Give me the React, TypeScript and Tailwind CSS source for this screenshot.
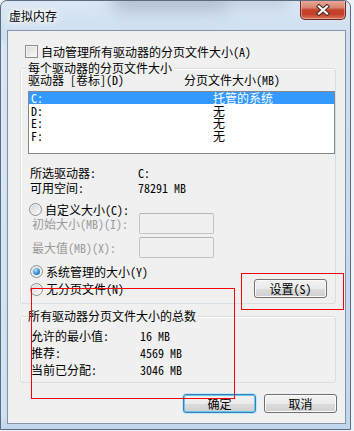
import React from "react";

const FONT = "font-['Noto_Sans_Mono_CJK_SC','Noto_Sans_CJK_SC',sans-serif]";

function Radio({ checked }: { checked?: boolean }) {
  return (
    <div className="w-[13px] h-[13px] shrink-0 rounded-full border border-[#8e8f8f] bg-[linear-gradient(135deg,#d6d6d6,#fafafa)] shadow-[inset_0_0_0_1px_#f2f2f2] flex items-center justify-center">
      {checked && (
        <div className="w-[7px] h-[7px] rounded-full bg-[radial-gradient(circle_at_35%_30%,#b9e2fb,#3b8fd6_55%,#1b4f8a)]" />
      )}
    </div>
  );
}

function Btn({ label, def, className }: { label: string; def?: boolean; className?: string }) {
  return (
    <div
      className={
        "w-[73px] h-[19px] rounded-[3px] flex items-center justify-center leading-[12px] bg-[linear-gradient(#f2f2f2_0%,#ebebeb_50%,#dddddd_50%,#cfcfcf_100%)] " +
        (def
          ? "border border-[#3c7fb1] shadow-[inset_0_0_0_1px_#62c7f2,0_0_0_1px_#bfe7f9] "
          : "border border-[#707070] shadow-[inset_0_0_0_1px_#fbfbfb] ") +
        (className ?? "")
      }
    >
      {label}
    </div>
  );
}

const rows = [
  { d: "C:", v: "托管的系统", sel: true, h: "h-[12px]" },
  { d: "D:", v: "无", sel: false, h: "h-[13px]" },
  { d: "E:", v: "无", sel: false, h: "h-[12px]" },
  { d: "F:", v: "无", sel: false, h: "h-[13px]" },
];

export default function App() {
  return (
    <div className={"relative w-[354px] h-[431px] overflow-hidden bg-[#eef3f9] text-[12px] leading-[12px] text-black " + FONT}>
      {/* window */}
      <div className="relative w-[351px] h-[430px] rounded-t-[7px] border border-[#5b6b80] bg-[linear-gradient(180deg,#dbe7f4_0%,#cddff1_8%,#c2d7ee_100%)] flex flex-col overflow-hidden">
        {/* glass blur blobs */}
        <div className="absolute left-[110px] top-[-12px] w-[120px] h-[22px] rounded-full bg-[#7f8ea4]/45 blur-[8px]" />
        <div className="absolute left-[230px] top-[-10px] w-[60px] h-[16px] rounded-full bg-[#9aa8bb]/40 blur-[7px]" />
        <div className="absolute left-[-6px] top-[40px] w-[10px] h-[380px] bg-[#ffffff]/40 blur-[3px]" />

        {/* title bar */}
        <div className="relative h-[29px] shrink-0 flex items-center pl-[8px]">
          <span className="[text-shadow:0_0_5px_#ffffff,0_0_9px_#ffffff,0_0_12px_#ffffff]">虚拟内存</span>
        </div>

        {/* close button */}
        <div className="absolute right-[4px] top-[-1px] w-[46px] h-[20px] rounded-b-[5px] border border-t-0 border-[#6b2a20] bg-[linear-gradient(180deg,#e9ab9a_0%,#d98470_40%,#c4432b_52%,#c3402a_75%,#d8745a_100%)] shadow-[inset_0_0_0_1px_rgba(255,220,210,0.45)] flex items-center justify-center">
          <svg width="14" height="12" viewBox="0 0 14 12">
            <path d="M3 2.5 L11 9.5 M11 2.5 L3 9.5" stroke="#4a2a24" strokeWidth="4.2" strokeLinecap="square" />
            <path d="M3 2.5 L11 9.5 M11 2.5 L3 9.5" stroke="#ffffff" strokeWidth="2.2" strokeLinecap="square" />
          </svg>
        </div>

        {/* client area */}
        <div className="relative ml-[6px] w-[339px] h-[394px] shrink-0 border border-[#8394a9] bg-[#f0f0f0] flex flex-col">
          {/* auto manage checkbox */}
          <div className="mt-[14px] h-[13px] flex items-center pl-[17px] gap-[3px]">
            <div className="w-[13px] h-[13px] shrink-0 border border-[#8e8f8f] bg-[linear-gradient(135deg,#d8d8d8,#fbfbfb)] shadow-[inset_0_0_0_1px_#f3f3f3]" />
            <span>自动管理所有驱动器的分页文件大小(A)</span>
          </div>

          {/* group 1 */}
          <div className="relative mt-[10px] ml-[12px] w-[316px] h-[236px] shrink-0 rounded-[3px] border border-[#d5dfe5] shadow-[inset_1px_1px_0_#ffffff] flex flex-col">
            <span className="absolute left-[5px] -top-[7px] px-[2px] bg-[#f0f0f0] leading-[12px]">每个驱动器的分页文件大小</span>

            <div className="mt-[5px] h-[12px] flex pl-[7px]">
              <span className="w-[156px]">驱动器 [卷标](D)</span>
              <span>分页文件大小(MB)</span>
            </div>

            <div className="mt-[5px] ml-[7px] w-[307px] h-[63px] shrink-0 border border-[#828790] bg-white flex flex-col">
              {rows.map((r) => (
                <div
                  key={r.d}
                  className={
                    r.h +
                    " flex items-center leading-[12px] pl-[2px] " +
                    (r.sel ? "bg-[#3399ff] text-white" : "")
                  }
                >
                  <span className="w-[182px]">{r.d}</span>
                  <span>{r.v}</span>
                </div>
              ))}
            </div>

            <div className="mt-[13px] h-[12px] flex pl-[9px]">
              <span className="w-[108px]">所选驱动器:</span>
              <span>C:</span>
            </div>
            <div className="mt-[3px] h-[12px] flex pl-[9px]">
              <span className="w-[108px]">可用空间:</span>
              <span>78291 MB</span>
            </div>

            <div className="mt-[9px] h-[13px] flex items-center pl-[8px] gap-[3px]">
              <Radio />
              <span>自定义大小(C):</span>
            </div>

            <div className="-mt-[3px] h-[21px] flex items-center pl-[11px]">
              <span className="w-[107px] text-[#9a9a9a]">初始大小(MB)(I):</span>
              <div className="w-[75px] h-[21px] rounded-[2px] border border-[#c3c3c3] border-t-[#b3b3b3] bg-[#f0f0f0]" />
            </div>
            <div className="mt-[3px] h-[21px] flex items-center pl-[11px]">
              <span className="w-[107px] text-[#9a9a9a]">最大值(MB)(X):</span>
              <div className="w-[75px] h-[21px] rounded-[2px] border border-[#c3c3c3] border-t-[#b3b3b3] bg-[#f0f0f0]" />
            </div>

            <div className="mt-[7px] h-[13px] flex items-center pl-[9px] gap-[3px]">
              <Radio checked />
              <span>系统管理的大小(Y)</span>
            </div>

            <div className="mt-[1px] h-[19px] flex items-center pl-[9px]">
              <div className="flex items-center gap-[3px] pt-[1px]">
                <Radio />
                <span>无分页文件(N)</span>
              </div>
              <Btn label="设置(S)" className="ml-auto mr-[8px]" />
            </div>
          </div>

          {/* group 2 */}
          <div className="relative mt-[12px] ml-[12px] w-[316px] h-[67px] shrink-0 rounded-[3px] border border-[#d5dfe5] shadow-[inset_1px_1px_0_#ffffff] flex flex-col">
            <span className="absolute left-[5px] -top-[7px] px-[2px] bg-[#f0f0f0] leading-[12px]">所有驱动器分页文件大小的总数</span>
            <div className="mt-[10px] h-[17px] flex items-center pl-[10px]">
              <span className="w-[109px]">允许的最小值:</span>
              <span>16 MB</span>
            </div>
            <div className="h-[17px] flex items-center pl-[10px]">
              <span className="w-[109px]">推荐:</span>
              <span>4569 MB</span>
            </div>
            <div className="h-[17px] flex items-center pl-[10px]">
              <span className="w-[109px]">当前已分配:</span>
              <span>3046 MB</span>
            </div>
          </div>

          {/* buttons */}
          <div className="mt-[11px] flex justify-end gap-[8px] pr-[8px]">
            <Btn label="确定" def />
            <Btn label="取消" />
          </div>
        </div>
      </div>

      {/* red annotation boxes */}
      <div className="absolute left-[241px] top-[273px] w-[103px] h-[37px] border border-[#ff0000]" />
      <div className="absolute left-[31px] top-[288px] w-[204px] h-[111px] border border-[#ff0000]" />
    </div>
  );
}
